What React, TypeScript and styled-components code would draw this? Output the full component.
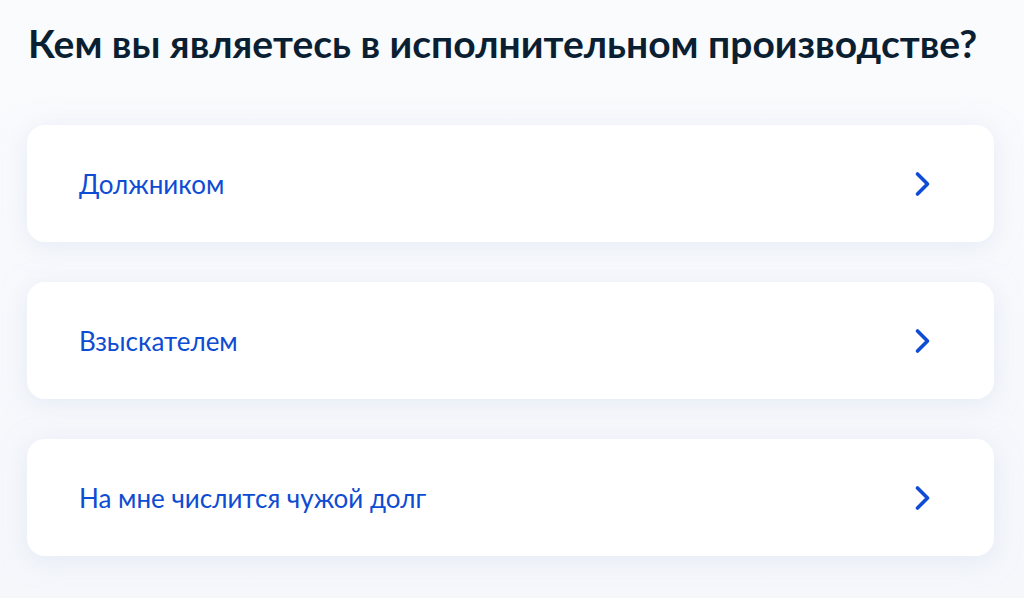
import React from 'react'
import styled, { createGlobalStyle } from 'styled-components'

const GlobalStyle = createGlobalStyle`
  html, body {
    margin: 0;
    padding: 0;
    background: #f8f9fc;
  }
  body {
    font-family: Lato, "Noto Sans", sans-serif;
  }
`

const Page = styled.div`
  width: 1024px;
  height: 598px;
  box-sizing: border-box;
  padding: 17px 30px 0 27px;
  background: linear-gradient(180deg, #fafbfd 0%, #f5f7fb 100%);
  overflow: hidden;
`

const Title = styled.h1`
  margin: 0 0 0 1px;
  font-size: 39px;
  line-height: 52px;
  font-weight: 700;
  color: #0b1f33;
  white-space: nowrap;
`

const OptionList = styled.div`
  display: flex;
  flex-direction: column;
  gap: 40px;
  margin-top: 56px;
`

const OptionCard = styled.button`
  display: flex;
  align-items: center;
  justify-content: space-between;
  width: 967px;
  height: 117px;
  box-sizing: border-box;
  padding: 0 62px 0 52px;
  border: none;
  border-radius: 18px;
  background: #ffffff;
  box-shadow: 0 4px 24px rgba(214, 222, 240, 0.55);
  cursor: pointer;
  font-family: inherit;
  text-align: left;
`

const OptionLabel = styled.span`
  font-size: 26px;
  line-height: 34px;
  color: #0d4cd3;
`

const Chevron = () => (
  <svg width="18" height="26" viewBox="0 0 18 26" fill="none">
    <path
      d="M3.5 3 L13.5 13 L3.5 23"
      stroke="#0d4cd3"
      strokeWidth="3.6"
      strokeLinecap="round"
      strokeLinejoin="round"
    />
  </svg>
)

const options = ['Должником', 'Взыскателем', 'На мне числится чужой долг']

export default function App() {
  return (
    <>
      <GlobalStyle />
      <Page>
        <Title>Кем вы являетесь в исполнительном производстве?</Title>
        <OptionList>
          {options.map((label) => (
            <OptionCard key={label}>
              <OptionLabel>{label}</OptionLabel>
              <Chevron />
            </OptionCard>
          ))}
        </OptionList>
      </Page>
    </>
  )
}
